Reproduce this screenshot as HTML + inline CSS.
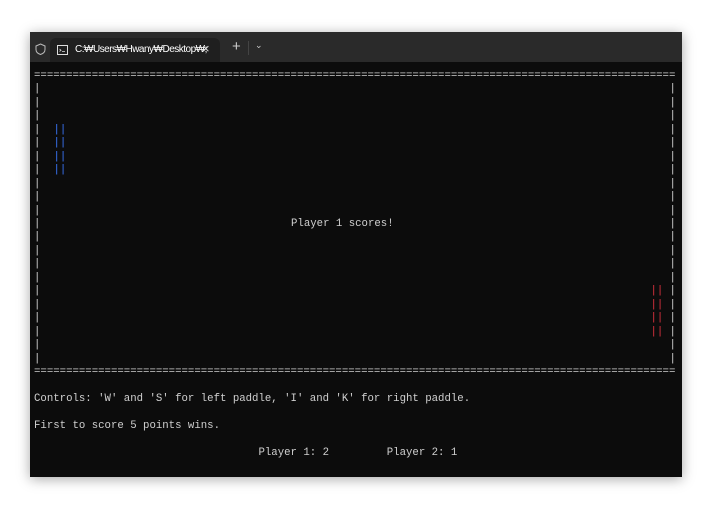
<!DOCTYPE html>
<html><head><style>
html,body{margin:0;padding:0;background:#fff;width:712px;height:508px;overflow:hidden}
.win{position:absolute;left:30px;top:32px;width:652px;height:445px;background:#0c0c0c;box-shadow:0 2px 12px rgba(0,0,0,.35)}
.bar{position:absolute;left:0;top:0;width:652px;height:30px;background:#2a2a2a}
.tab{position:absolute;left:20px;top:6px;width:170px;height:24px;background:#1f1f1f;border-radius:6px 6px 0 0}
.tt{position:absolute;left:25px;top:6px;font:10px "Liberation Sans",sans-serif;color:#fff;letter-spacing:-.5px;white-space:nowrap}
pre{position:absolute;margin:0;font-family:"Liberation Mono",monospace;font-size:10.7px;line-height:13.45px;color:#d0d0d0}
.b{color:#3b78ff}.r{color:#e0323f}
</style></head><body>
<div class="win">
<div class="bar">
<svg style="position:absolute;left:5px;top:11px" width="11" height="12" viewBox="0 0 11 12"><path d="M5.5 1L10 3v3.5c0 2.5-2 4.2-4.5 5C3 10.7 1 9 1 6.5V3z" fill="none" stroke="#bbb" stroke-width="1"/></svg>
<div class="tab">
<svg style="position:absolute;left:7px;top:7px" width="11" height="10" viewBox="0 0 11 10"><rect x=".5" y=".5" width="10" height="9" fill="none" stroke="#ddd"/><path d="M2.5 4l1.5 1.2-1.5 1.2M5 6.5h3" stroke="#ddd" fill="none" stroke-width=".8"/></svg>
<div class="tt">C:₩Users₩Hwany₩Desktop₩;</div>
<div style="position:absolute;left:152px;top:3px;color:#ddd;font:13px 'Liberation Sans',sans-serif">×</div>
</div>
<div style="position:absolute;left:202px;top:6px;color:#ccc;font:15px 'Liberation Sans',sans-serif">+</div>
<div style="position:absolute;left:218px;top:9px;width:1px;height:14px;background:#444"></div>
<div style="position:absolute;left:225px;top:8px;color:#ccc;font:9px 'Liberation Sans',sans-serif">⌄</div>
</div>
</div>
<pre style="left:34px;top:70px">====================================================================================================</pre>
<pre style="left:34px;top:83.45px">|
|
|
|
|
|
|
|
|
|
|
|
|
|
|
|
|
|
|
|
|</pre>
<pre style="left:669.5px;top:83.45px">|
|
|
|
|
|
|
|
|
|
|
|
|
|
|
|
|
|
|
|
|</pre>
<pre class="b" style="left:53.5px;top:123.8px">||
||
||
||</pre>
<pre class="r" style="left:650.5px;top:285.2px">||
||
||
||</pre>
<pre style="left:291px;top:217.9px">Player 1 scores!</pre>
<pre style="left:34px;top:365.9px">====================================================================================================

Controls: 'W' and 'S' for left paddle, 'I' and 'K' for right paddle.

First to score 5 points wins.

                                   Player 1: 2         Player 2: 1</pre>
</body></html>
